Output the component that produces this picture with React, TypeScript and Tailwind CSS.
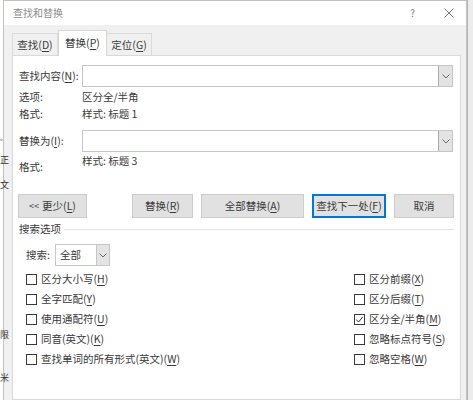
import React from "react";

const font = "font-['Microsoft_YaHei','Noto_Sans_CJK_SC',sans-serif]";

function U({ c }: { c: string }) {
  return <span className="underline decoration-[0.5px] underline-offset-[2px]">{c}</span>;
}

function Chevron() {
  return (
    <svg width="8" height="5" viewBox="0 0 8 5" aria-hidden>
      <path d="M0.5 0.5 L4 4 L7.5 0.5" fill="none" stroke="#6b6b6b" strokeWidth="1" />
    </svg>
  );
}

function Combo() {
  return (
    <div className="flex h-[22px] w-[371px] border border-[#c6c6c6] bg-white">
      <div className="flex-1" />
      <div className="flex w-[14px] items-center justify-center border-l border-[#a9a9a9] bg-[#e3e3e3]">
        <Chevron />
      </div>
    </div>
  );
}

function Btn({ w, children, primary }: { w: string; children: React.ReactNode; primary?: boolean }) {
  return (
    <div
      className={`flex h-[24px] items-center justify-center bg-[#e1e1e1] ${w} ${
        primary ? "border-2 border-[#0078d7]" : "border border-[#cccccc]"
      }`}
    >
      {children}
    </div>
  );
}

function Check({ label, checked }: { label: React.ReactNode; checked?: boolean }) {
  return (
    <div className="flex h-[20px] items-center gap-[4px]">
      <div className="flex h-[11px] w-[11px] items-center justify-center border border-[#3a3a3a] bg-white">
        {checked && (
          <svg width="9" height="9" viewBox="0 0 9 9" aria-hidden>
            <path d="M1.2 4.6 L3.6 7 L7.8 1.8" fill="none" stroke="#333" strokeWidth="1" />
          </svg>
        )}
      </div>
      <span>{label}</span>
    </div>
  );
}

export default function App() {
  return (
    <div className={`relative flex h-[400px] w-[473px] overflow-hidden bg-white text-[10.5px] leading-[14px] text-[#3a3a3a] ${font}`}>
      <div className="w-[3px] shrink-0 bg-white" />
      <div className="flex w-[464px] shrink-0 flex-col border-x border-t border-[#c3c3c3]">
        <div className="flex h-[24px] shrink-0 items-center bg-white pl-[9px] pr-[12px] text-[10px] text-[#8c8c8c]">
          <span>查找和替换</span>
          <span className="ml-auto mr-[29px] text-[10px] text-[#7a7a7a]">?</span>
          <svg width="10" height="10" viewBox="0 0 10 10" aria-hidden>
            <path d="M0.5 0.5 L9.5 9.5 M9.5 0.5 L0.5 9.5" stroke="#7a7a7a" strokeWidth="1" />
          </svg>
        </div>
        <div className="flex flex-1 flex-col bg-[#f0f0f0] pl-[8px] pr-[5px]">
          <div className="flex h-[30px] shrink-0 items-end">
            <div className="flex h-[22px] w-[46px] items-center justify-center border border-b-0 border-[#dadada] bg-[#f0f0f0]">
              查找(<U c="D" />)
            </div>
            <div className="relative z-10 -mb-px flex h-[26px] w-[49px] items-center justify-center border border-b-0 border-[#d6d6d6] bg-white pb-[2px]">
              替换(<U c="P" />)
            </div>
            <div className="flex h-[22px] w-[45px] items-center justify-center border border-b-0 border-l-0 border-[#dadada] bg-[#f0f0f0]">
              定位(<U c="G" />)
            </div>
          </div>
          <div className="flex flex-1 flex-col border border-[#d9d9d9] bg-white pl-[6px] pr-[6px]">
            <div className="mt-[9px] flex h-[22px] items-center">
              <span className="w-[63px]">查找内容(<U c="N" />):</span>
              <Combo />
            </div>
            <div className="mt-[3px] flex h-[14px] items-center">
              <span className="w-[63px]">选项:</span>
              <span>区分全/半角</span>
            </div>
            <div className="mt-[3px] flex h-[14px] items-center">
              <span className="w-[63px]">格式:</span>
              <span>样式: 标题 1</span>
            </div>
            <div className="mt-[9px] flex h-[22px] items-center">
              <span className="w-[63px]">替换为(<U c="I" />):</span>
              <Combo />
            </div>
            <div className="mt-[2px] flex h-[20px] items-start">
              <span className="mt-[6px] w-[63px]">格式:</span>
              <span>样式: 标题 3</span>
            </div>
            <div className="mt-[20px] flex h-[24px] items-center">
              <Btn w="w-[69px] -ml-px">
                <span className="mr-[3px] text-[9px]">&lt;&lt;</span>更少(<U c="L" />)
              </Btn>
              <div className="ml-auto flex gap-[8px]">
                <Btn w="w-[61px]">
                  替换(<U c="R" />)
                </Btn>
                <Btn w="w-[103px]">
                  全部替换(<U c="A" />)
                </Btn>
                <Btn w="w-[74px]" primary>
                  查找下一处(<U c="F" />)
                </Btn>
                <Btn w="w-[60px]">取消</Btn>
              </div>
            </div>
            <div className="mt-[4px] flex h-[14px] items-center">
              <span>搜索选项</span>
              <div className="ml-[3px] h-px flex-1 bg-[#e3e3e3]" />
            </div>
            <div className="mt-[8px] flex h-[22px] items-center pl-[7px]">
              <span className="w-[29px]">搜索:</span>
              <div className="flex h-[22px] w-[55px] border border-[#c6c6c6] bg-white">
                <span className="flex flex-1 items-center pl-[4px]">全部</span>
                <div className="flex w-[13px] items-center justify-center border-l border-[#c6c6c6] bg-[#e3e3e3]">
                  <Chevron />
                </div>
              </div>
            </div>
            <div className="mt-[3px] grid grid-cols-[328px_1fr] pl-[7px]">
              <div className="flex flex-col">
                <Check label={<>区分大小写(<U c="H" />)</>} />
                <Check label={<>全字匹配(<U c="Y" />)</>} />
                <Check label={<>使用通配符(<U c="U" />)</>} />
                <Check label={<>同音(英文)(<U c="K" />)</>} />
                <Check label={<>查找单词的所有形式(英文)(<U c="W" />)</>} />
              </div>
              <div className="flex flex-col">
                <Check label={<>区分前缀(<U c="X" />)</>} />
                <Check label={<>区分后缀(<U c="T" />)</>} />
                <Check checked label={<>区分全/半角(<U c="M" />)</>} />
                <Check label={<>忽略标点符号(<U c="S" />)</>} />
                <Check label={<>忽略空格(<U c="W" />)</>} />
              </div>
            </div>
          </div>
        </div>
      </div>
      <div className="flex-1 border-l border-[#b5b5b5] bg-[#ececec]" />
      <div className="pointer-events-none absolute left-0 top-0 h-full w-[10px] text-[9px] leading-none text-[#333]">
        <span className="absolute left-0 top-[134px] text-[7px]">。</span>
        <span className="absolute left-0 top-[155px]">正</span>
        <span className="absolute left-0 top-[180px]">文</span>
        <span className="absolute left-0 top-[330px]">限</span>
        <span className="absolute left-0 top-[373px]">米</span>
      </div>
    </div>
  );
}
